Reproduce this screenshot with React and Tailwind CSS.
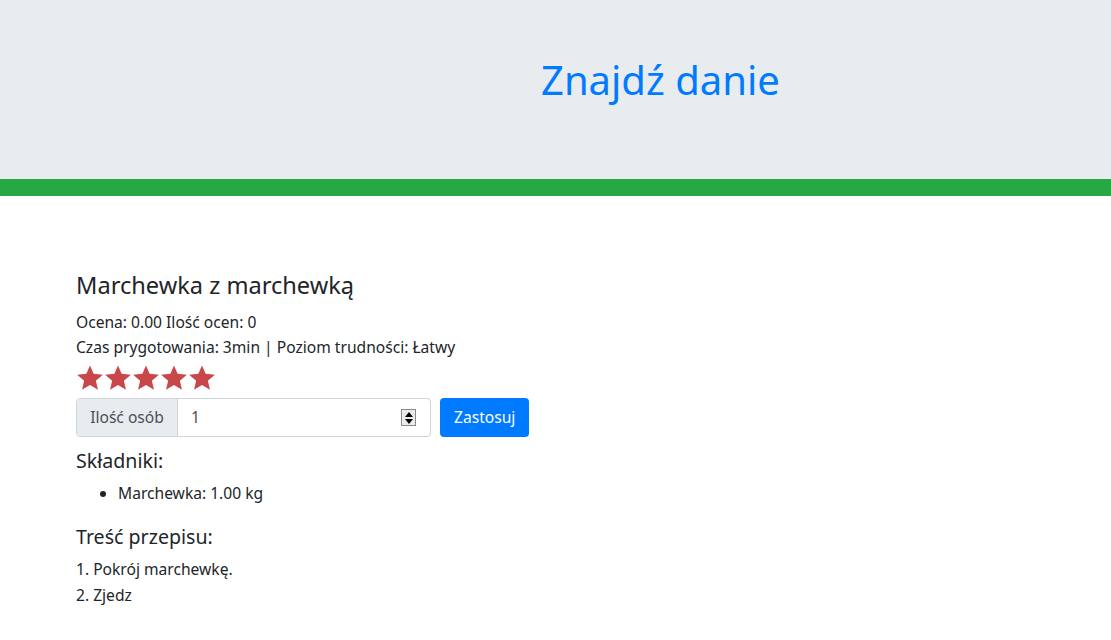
import React from 'react';

const Star = () => (
  <svg viewBox="0 0 24 24" className="w-[28px] h-[28px]" fill="#c9474a">
    <path d="M12 1.2l3.15 7.25 7.85.7-5.95 5.2 1.77 7.72L12 18.1l-6.82 3.97 1.77-7.72L1 9.15l7.85-.7z" />
  </svg>
);

export default function App() {
  return (
    <div className="min-h-[640px] bg-white text-[#212529]" style={{ fontFamily: '"Noto Sans", "Open Sans", sans-serif' }}>
      {/* header */}
      <div className="bg-[#e9ecef] h-[179px] pt-[50px]">
        <h1 className="text-[#007bff] text-[40px] leading-[60px] pl-[541px]">Znajdź danie</h1>
      </div>
      <div className="h-[17px] bg-[#28a745]" />

      {/* content */}
      <div className="px-[76px] pt-[73px]">
        <h4 className="text-[23.6px] leading-[32px] mb-[9px]">Marchewka z marchewką</h4>
        <p className="text-[15.6px] leading-[25px]">Ocena: 0.00 Ilość ocen: 0</p>
        <p className="text-[15.6px] leading-[25px]">Czas prygotowania: 3min | Poziom trudności: Łatwy</p>
        <div className="flex h-[28px] mt-[4px]">
          <Star /><Star /><Star /><Star /><Star />
        </div>
        <div className="flex items-center gap-[9px] mt-[6px]">
          <div className="flex w-[355px] h-[39px] border border-[#ced4da] rounded-[4px] overflow-hidden">
            <div className="w-[101px] bg-[#e9ecef] border-r border-[#ced4da] flex items-center justify-center text-[15.6px] text-[#495057]">Ilość osób</div>
            <div className="flex-1 flex items-center pl-[13px] pr-[14px] text-[15.6px] text-[#495057]">
              <span className="flex-1">1</span>
              <div className="w-[15px] h-[17px] border border-[#8a8a8a] bg-[#ececec] flex flex-col items-center justify-center gap-[2px]">
                <div className="w-0 h-0 border-x-[4px] border-x-transparent border-b-[5px] border-b-black" />
                <div className="w-0 h-0 border-x-[4px] border-x-transparent border-t-[5px] border-t-black" />
              </div>
            </div>
          </div>
          <button className="h-[39px] px-[14px] bg-[#007bff] text-white text-[15.6px] rounded-[4px]">Zastosuj</button>
        </div>
        <h5 className="text-[19.6px] leading-[26px] mt-[11px]">Składniki:</h5>
        <ul className="list-disc pl-[42px] mt-[7px] text-[15.6px] leading-[24px]">
          <li>Marchewka: 1.00 kg</li>
        </ul>
        <h5 className="text-[19.6px] leading-[26px] mt-[19px]">Treść przepisu:</h5>
        <p className="text-[15.6px] leading-[26px] mt-[6px]">1. Pokrój marchewkę.</p>
        <p className="text-[15.6px] leading-[26px]">2. Zjedz</p>
      </div>
    </div>
  );
}
